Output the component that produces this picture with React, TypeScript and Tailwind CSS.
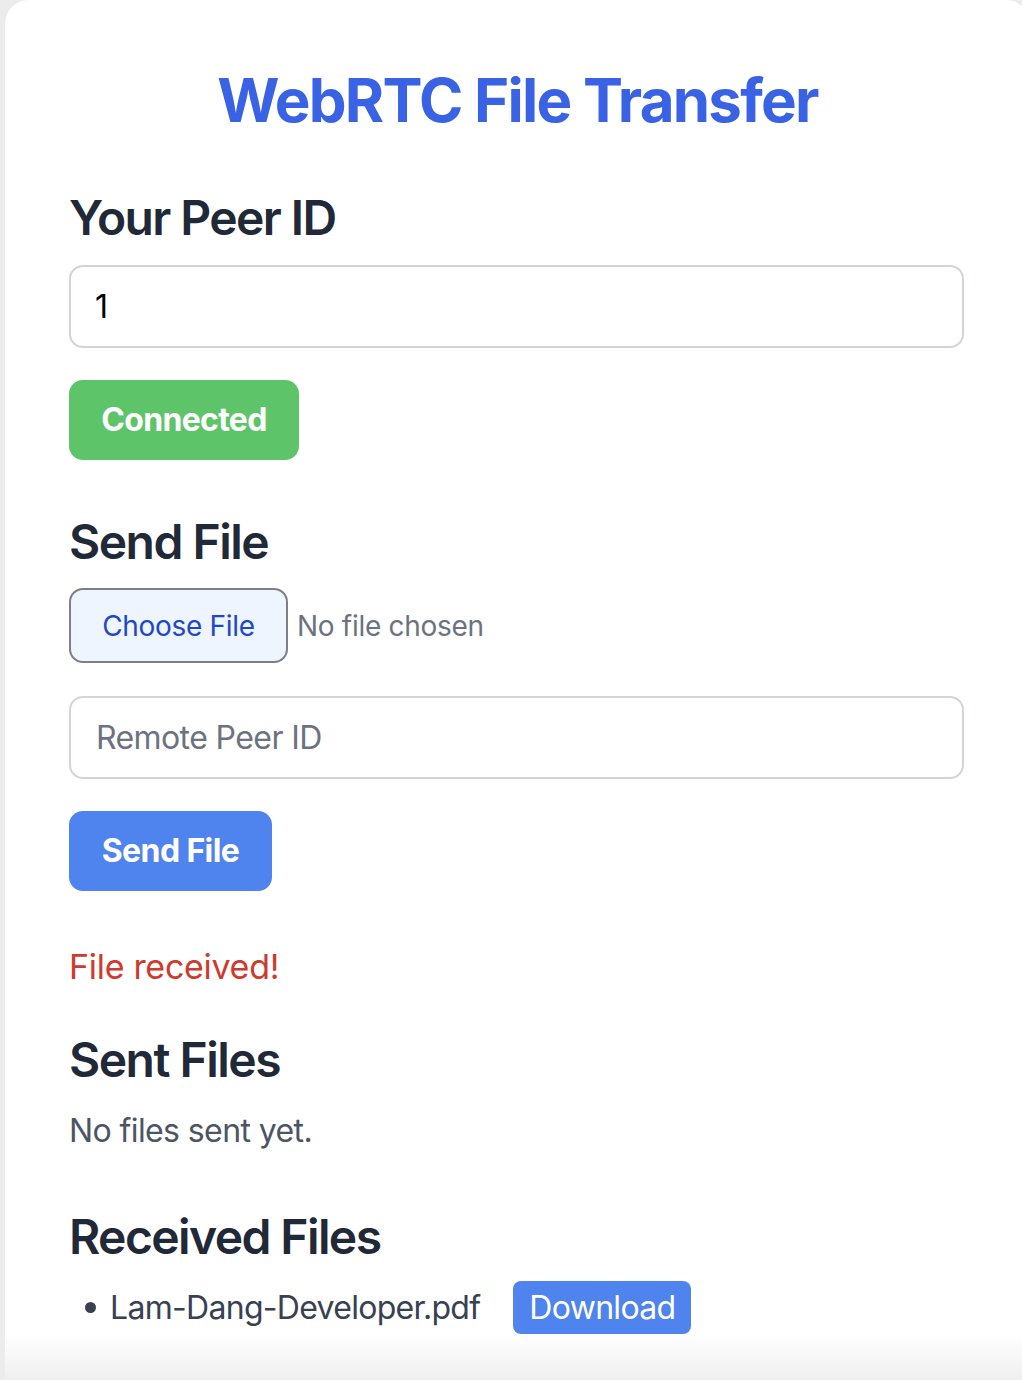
import React from "react";

export default function App() {
  return (
    <div
      className="min-h-[1380px] w-[1022px] overflow-hidden bg-[#ececec] pl-[5px]"
      style={{ fontFamily: "Inter, 'Noto Sans', sans-serif" }}
    >
      <div className="w-[1025px] rounded-t-[24px] bg-white">
        <div className="px-[64px] pt-[64px]">
          <h1 className="mb-[50px] text-center text-[60px] font-bold leading-[72px] tracking-[-1.75px] text-[#3962e4]">
            WebRTC File Transfer
          </h1>

          <h2 className="mb-[15px] text-[48px] font-semibold leading-[64px] tracking-[-1.6px] text-[#1f2937]">
            Your Peer ID
          </h2>
          <div className="flex h-[83px] w-[895px] items-center rounded-[14px] border-2 border-[#d1d5db] px-[24px] text-[32px] text-black">
            1
          </div>
          <button className="mt-[32px] flex h-[80px] w-[230px] items-center justify-center rounded-[14px] bg-[#5ec46a] text-[32px] font-bold tracking-[-0.7px] text-white">
            Connected
          </button>

          <h2 className="mt-[50px] mb-[14px] text-[48px] font-semibold leading-[64px] tracking-[-1.5px] text-[#1f2937]">
            Send File
          </h2>
          <div className="flex items-center">
            <div className="flex h-[75px] w-[219px] items-center justify-center rounded-[14px] border-2 border-[#7c7f86] bg-[#eef5ff] text-[28px] tracking-[-0.3px] text-[#1f48c9]">
              Choose File
            </div>
            <span className="ml-[9px] text-[28px] tracking-[-0.3px] text-[#6b7280]">No file chosen</span>
          </div>
          <div className="mt-[33px] flex h-[83px] w-[895px] items-center rounded-[14px] border-2 border-[#d1d5db] px-[25px] text-[32px] tracking-[-0.6px] text-[#6b7280]">
            Remote Peer ID
          </div>
          <button className="mt-[32px] flex h-[80px] w-[203px] items-center justify-center rounded-[14px] bg-[#4f83ed] text-[32px] font-bold tracking-[-0.6px] text-white">
            Send File
          </button>

          <p className="mt-[52px] text-[34px] leading-[48px] tracking-[-0.3px] text-[#cf3a2f]">File received!</p>

          <h2 className="mt-[37px] mb-[15px] text-[48px] font-semibold leading-[64px] tracking-[-1.5px] text-[#1f2937]">
            Sent Files
          </h2>
          <p className="text-[32px] leading-[48px] tracking-[-0.6px] text-[#4b5563]">No files sent yet.</p>

          <h2 className="mt-[50px] mb-[12px] text-[48px] font-semibold leading-[64px] tracking-[-1.6px] text-[#1f2937]">
            Received Files
          </h2>
          <ul className="pl-[16px]">
            <li className="flex items-center text-[32px] tracking-[-0.7px] text-[#374151]">
              <span className="mr-[14px] h-[11px] w-[11px] rounded-full bg-[#374151]" />
              <span>Lam-Dang-Developer.pdf</span>
              <button className="ml-[33px] flex h-[53px] items-center rounded-[8px] bg-[#4f83ed] px-[16px] text-[32px] tracking-[-0.7px] text-white">
                Download
              </button>
            </li>
          </ul>
        </div>
        <div className="h-[46px] bg-gradient-to-b from-white to-[#efefef]" />
      </div>
    </div>
  );
}
